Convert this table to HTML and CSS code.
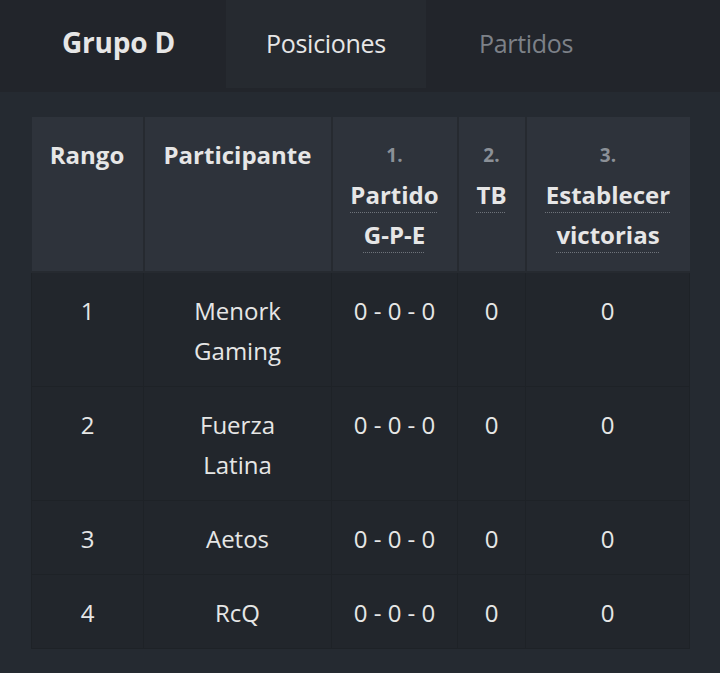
FILE: index.html
```html
<!DOCTYPE html>
<html lang="es">
<head>
<meta charset="utf-8">
<title>Grupo D</title>
<link rel="stylesheet" href="styles.css">
</head>
<body>
<header class="tabs">
  <div class="title">Grupo D</div>
  <div class="tab active">Posiciones</div>
  <div class="tab">Partidos</div>
</header>
<main class="content">
  <table class="standings">
    <colgroup>
      <col class="c-rank">
      <col class="c-part">
      <col class="c-match">
      <col class="c-tb">
      <col class="c-set">
    </colgroup>
    <thead>
      <tr>
        <th>Rango</th>
        <th>Participante</th>
        <th><div class="num">1.</div><abbr>Partido</abbr><br><abbr>G-P-E</abbr></th>
        <th><div class="num">2.</div><abbr>TB</abbr></th>
        <th><div class="num">3.</div><abbr>Establecer</abbr><br><abbr>victorias</abbr></th>
      </tr>
    </thead>
    <tbody>
      <tr><td>1</td><td>Menork<br>Gaming</td><td>0 - 0 - 0</td><td>0</td><td>0</td></tr>
      <tr><td>2</td><td>Fuerza<br>Latina</td><td>0 - 0 - 0</td><td>0</td><td>0</td></tr>
      <tr><td>3</td><td>Aetos</td><td>0 - 0 - 0</td><td>0</td><td>0</td></tr>
      <tr><td>4</td><td>RcQ</td><td>0 - 0 - 0</td><td>0</td><td>0</td></tr>
    </tbody>
  </table>
</main>
</body>
</html>
```

FILE: styles.css
```css
html, body {
  margin: 0;
  padding: 0;
  background: #252a31;
  color: #e6e6e6;
  font-family: "Open Sans", "Noto Sans", sans-serif;
}
.tabs {
  display: flex;
  height: 92px;
  background: #22252b;
}
.title {
  width: 164px;
  padding-left: 62px;
  font-weight: 700;
  font-size: 28px;
  line-height: 84px;
  letter-spacing: -0.2px;
  color: #e6e6e6;
}
.tab {
  width: 200px;
  height: 88px;
  text-align: center;
  font-size: 25px;
  line-height: 86px;
  letter-spacing: -0.3px;
  color: #7d8188;
}
.tab.active {
  background: #262a30;
  color: #e6e6e6;
}
.content {
  padding: 25px 31px 24px;
}
.standings {
  width: 658px;
  border-collapse: collapse;
  table-layout: fixed;
  font-size: 24px;
  line-height: 40px;
}
.c-rank { width: 112px; }
.c-part { width: 188px; }
.c-match { width: 126px; }
.c-tb { width: 68px; }
.c-set { width: 164px; }
.standings th {
  background: #2e333b;
  border: 2px solid #262a30;
  border-top: 0;
  vertical-align: top;
  padding: 18px 0 16px;
  font-weight: 700;
  font-size: 24px;
  color: #e6e6e6;
  text-align: center;
}
.standings th:first-child { border-left: 0; }
.standings th:last-child { border-right: 0; }
.num {
  font-size: 19px;
  line-height: 40px;
  color: #8b9097;
}
abbr {
  text-decoration: underline dotted #6e737a;
  text-underline-offset: 8px;
  text-decoration-thickness: 1px;
}
.standings td {
  background: #22262c;
  border: 1px solid #1e2227;
  padding: 18px 0 15px;
  text-align: center;
  vertical-align: top;
  color: #e6e6e6;
}
```
